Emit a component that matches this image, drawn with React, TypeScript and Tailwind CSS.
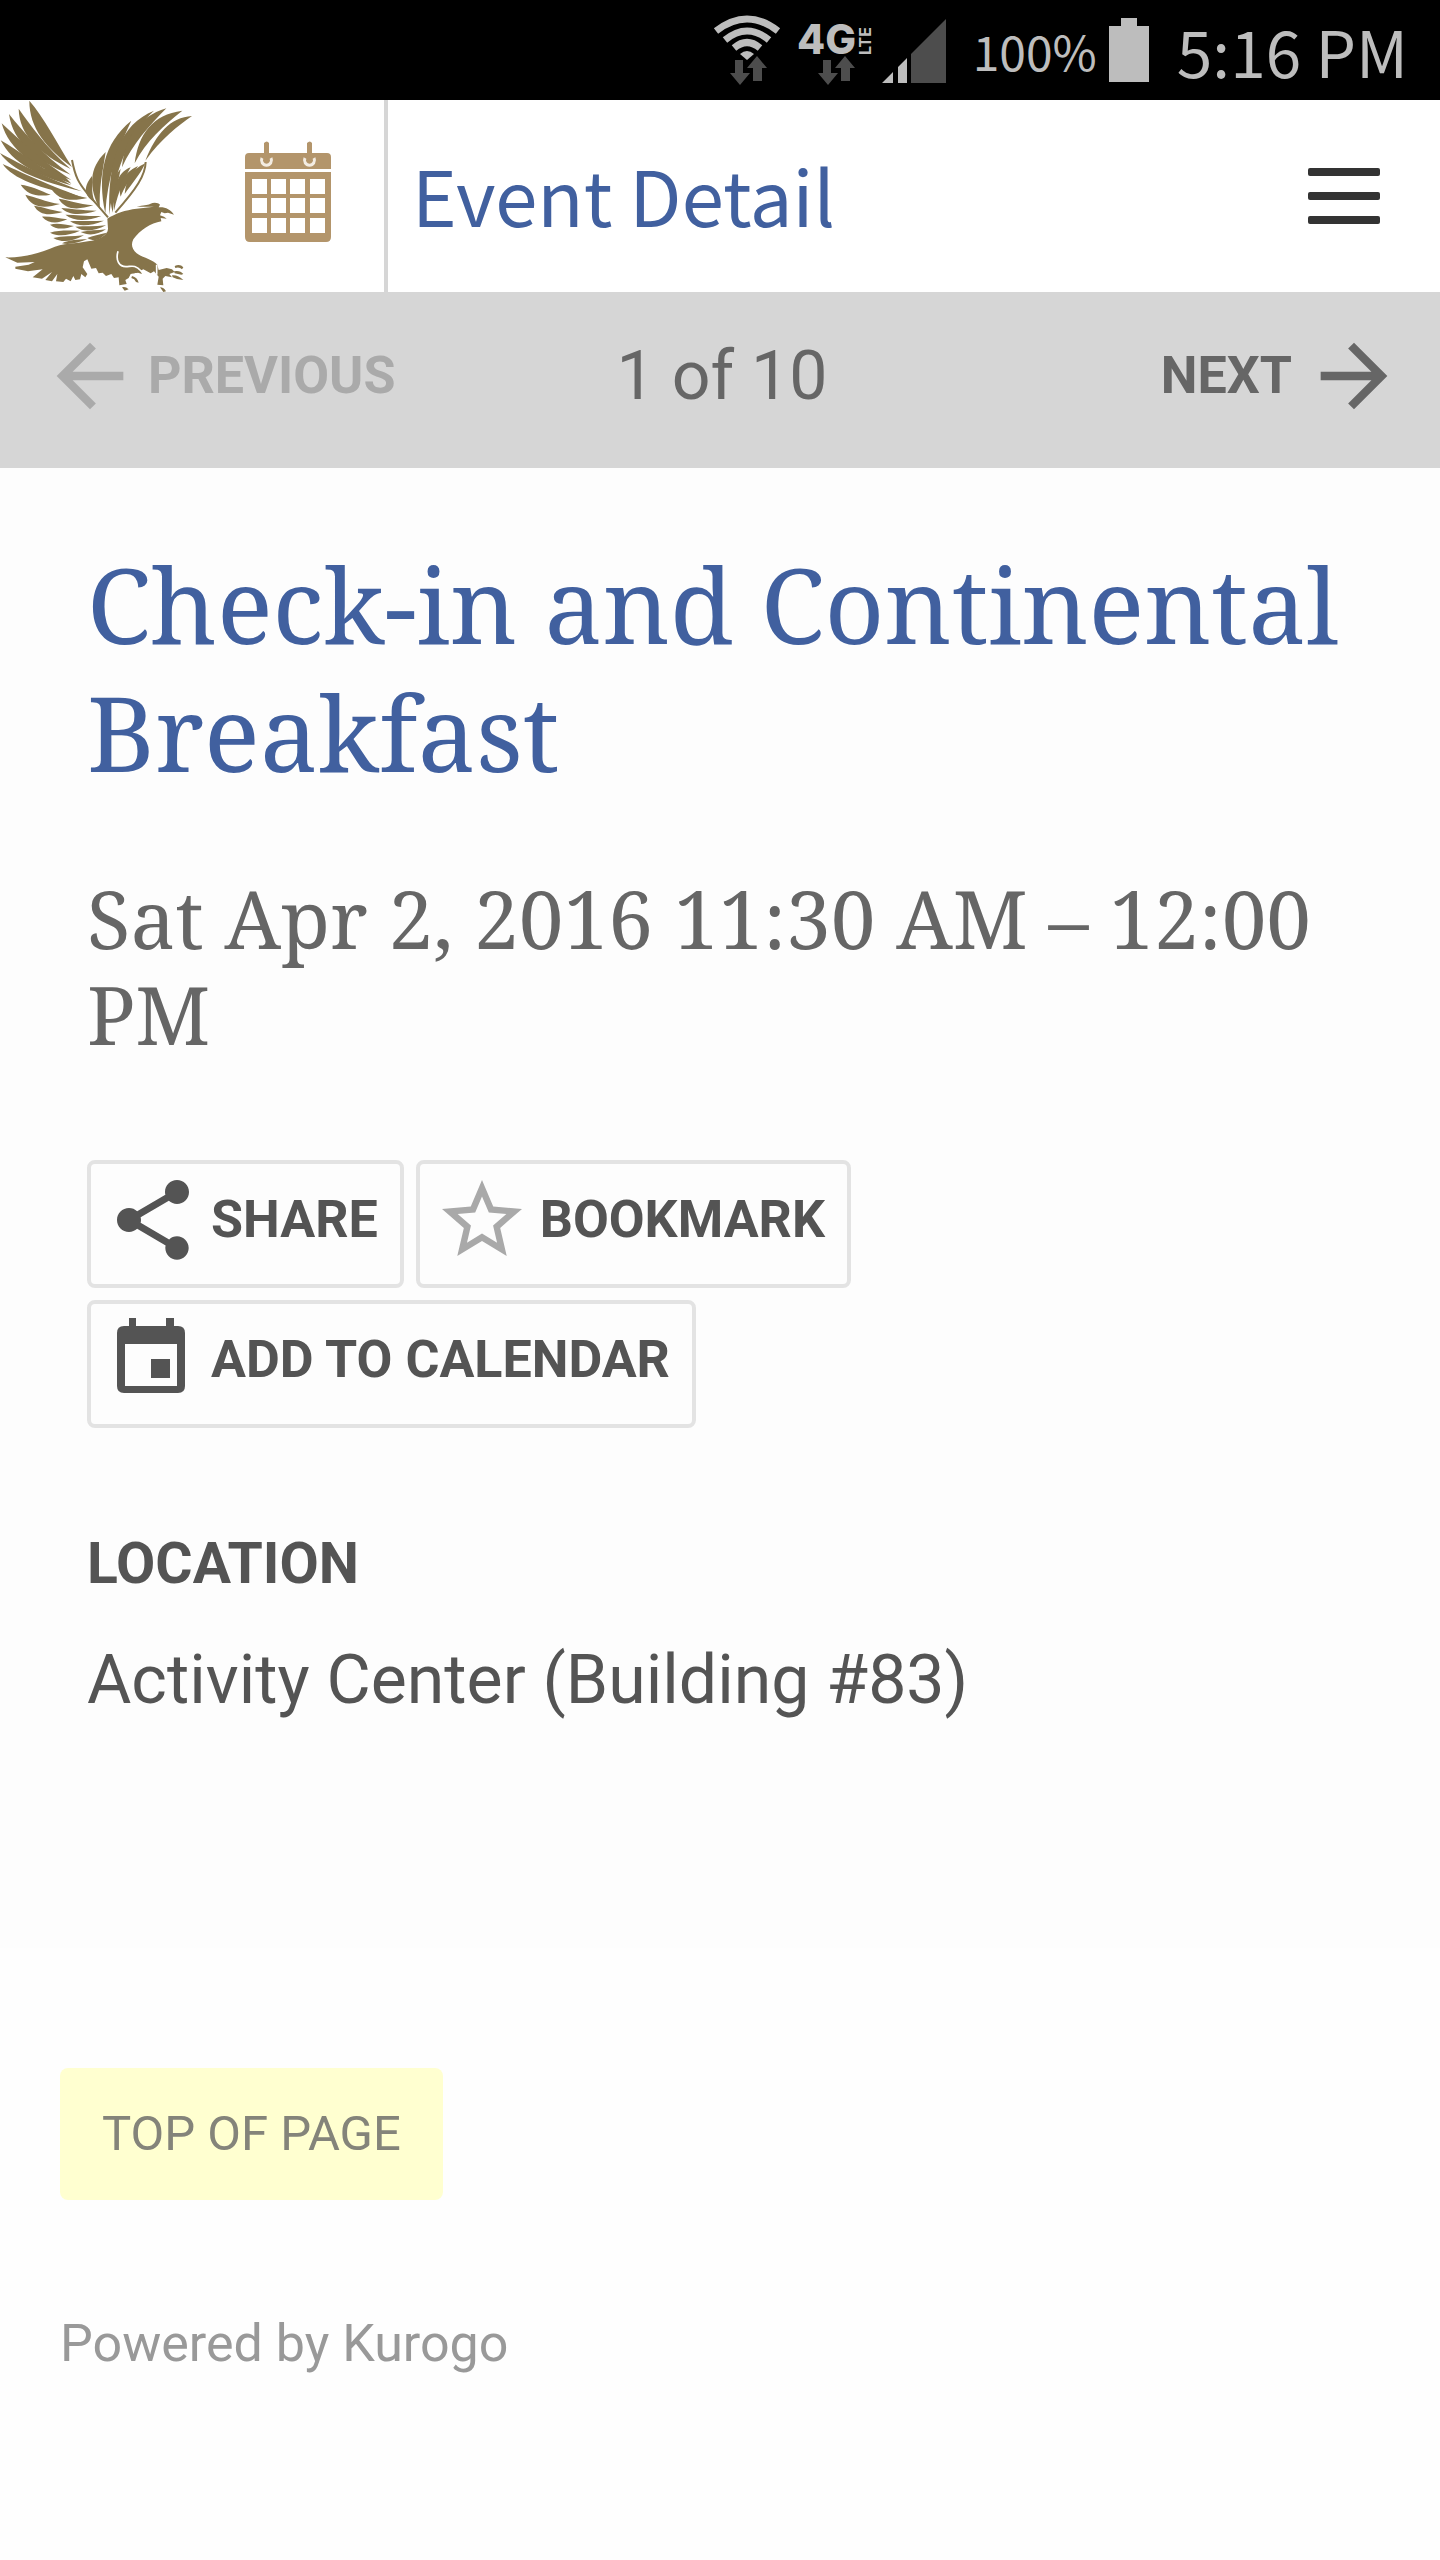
import React from "react";
import { MdArrowBack, MdArrowForward, MdShare, MdStarBorder } from "react-icons/md";

// tip x/y, bend x/y, root x/y, width
type Feather = [number, number, number, number, number, number, number];

const feathers: Feather[] = [
  // left wing, long feathers
  [88, 8, 122, 108, 216, 207, 32],
  [56, 32, 84, 128, 212, 213, 26],
  [27, 48, 68, 152, 212, 230, 26],
  [5, 76, 60, 172, 214, 246, 26],
  [2, 127, 70, 202, 214, 262, 24],
  [0, 165, 60, 222, 246, 280, 17],
  [8, 198, 60, 244, 246, 298, 17],
  [112, 214, 170, 224, 214, 257, 18],
  // left wing, outer short feathers
  [62, 260, 100, 286, 152, 290, 18],
  [76, 290, 110, 324, 180, 318, 20],
  [102, 323, 130, 346, 188, 342, 16],
  [126, 356, 160, 372, 202, 364, 14],
  [150, 380, 180, 388, 222, 384, 13],
  [150, 404, 190, 408, 240, 398, 13],
  [160, 420, 200, 428, 252, 412, 13],
  [186, 436, 220, 432, 262, 424, 9],
  // left wing, inner short feathers
  [150, 266, 190, 302, 262, 300, 20],
  [176, 302, 210, 330, 280, 322, 18],
  [184, 330, 220, 348, 290, 338, 13],
  [196, 350, 240, 366, 304, 354, 13],
  [210, 370, 250, 382, 312, 368, 12],
  [226, 386, 266, 398, 318, 382, 12],
  [242, 402, 280, 408, 318, 394, 11],
  [262, 420, 290, 424, 320, 404, 13],
  // right wing, long feathers
  [276, 234, 254, 286, 286, 314, 18],
  [317, 162, 272, 240, 300, 334, 26],
  [394, 68, 302, 180, 316, 346, 28],
  [462, 38, 338, 112, 328, 350, 24],
  [499, 31, 396, 90, 366, 208, 26],
  [547, 38, 438, 80, 404, 196, 28],
  [576, 54, 496, 78, 436, 188, 20],
  // right wing, inner feathers
  [362, 212, 332, 270, 338, 344, 15],
  [392, 208, 350, 240, 342, 338, 17],
  [414, 204, 362, 250, 362, 296, 18],
  [436, 196, 392, 236, 374, 288, 18],
];

function featherPath([tx, ty, bx, by, rx, ry, w]: Feather) {
  const length = Math.hypot(rx - tx, ry - ty);
  const nx = (-(ry - ty) / length) * w;
  const ny = ((rx - tx) / length) * w;
  const c1x = tx + ((bx - tx) * 2) / 3;
  const c1y = ty + ((by - ty) * 2) / 3;
  const c2x = rx + ((bx - rx) * 2) / 3;
  const c2y = ry + ((by - ry) * 2) / 3;
  return `M${tx} ${ty}C${c1x + nx * 0.85} ${c1y + ny * 0.85} ${c2x + nx * 0.55} ${c2y + ny * 0.55} ${rx} ${ry}C${c2x - nx * 0.55} ${c2y - ny * 0.55} ${c1x - nx * 0.85} ${c1y - ny * 0.85} ${tx} ${ty}Z`;
}

const EagleLogo = () => (
  <svg className="h-48 w-48" viewBox="0 6 576 576" fill="#86744a" aria-hidden="true">
    {feathers.map((feather, index) => (
      <path key={index} d={featherPath(feather)} />
    ))}
    {/* leading edges of both wings */}
    <path
      d="M216 186C226 238 236 254 260 284L324 358M437 192C436 232 410 272 346 344"
      fill="none"
      stroke="#86744a"
      strokeWidth="6"
    />
    {/* body, head and tail */}
    <path d="M322 362C346 346 376 336 410 332L462 326L410 326C430 322 442 322 450 318C462 312 474 314 480 320L476 328C494 326 512 334 522 350L504 344L494 346L484 342L480 352L492 356L500 362L482 360L484 370C452 376 420 396 400 424C392 440 396 454 410 466C430 480 458 484 472 500L476 516L500 510L516 514L524 522L508 528L516 538L496 534L488 542L490 562L472 560L476 536L462 520L452 526L430 514L410 524L392 528L386 540L376 546L380 558L358 562L356 538L342 540L334 528L318 534L308 524L296 526L288 510L274 512L262 484L252 490L248 508L262 528L256 538L244 528L240 544L226 546L220 534L212 550L198 542L190 552L168 550L172 528L156 550L136 546L156 522L126 542L98 538L128 514L84 520L46 512L46 506L86 500L104 492L52 494L16 478C60 480 110 468 150 452C190 434 226 438 264 430C296 426 324 412 324 392Z" />
    {/* thigh line */}
    <path
      d="M354 460C346 488 358 506 378 506C394 506 404 498 424 520M470 500L470 530"
      fill="none"
      stroke="#fff"
      strokeWidth="5"
    />
    {/* talons */}
    <path d="M524 504Q540 496 550 508L546 514Q538 506 526 510ZM522 520Q540 516 550 528L544 530L524 526ZM516 532Q534 530 550 546Q532 546 518 538ZM398 516Q418 510 426 528L414 524L400 526ZM396 534Q412 538 416 554L408 552Q404 542 394 540ZM366 568Q376 564 386 574L374 578ZM480 568Q492 568 498 580L490 582Z" />
  </svg>
);

const CalendarIcon = () => (
  <svg className="h-[102px] w-[86px]" viewBox="0 0 86 102" fill="#b3956b" aria-hidden="true">
    <path d="M4 12H82Q86 12 86 16V28H0V16Q0 12 4 12ZM0 31H86V96Q86 101 81 101H5Q0 101 0 96ZM7 38V53H22V38ZM26 38V53H41V38ZM45 38V53H60V38ZM65 38V53H80V38ZM7 57V72H22V57ZM26 57V72H41V57ZM45 57V72H60V57ZM65 57V72H80V57ZM7 77V92H22V77ZM26 77V92H41V77ZM45 77V92H60V77ZM65 77V92H80V77Z" fillRule="evenodd" />
    <path d="M17 17A5 5 0 1 0 26 17M60 17A5 5 0 1 0 69 17" fill="none" stroke="#f3ece2" strokeWidth="3" />
    <path d="M19 2Q22 -1 24 2V20Q22 23 19 20ZM62 2Q65 -1 67 2V20Q65 23 62 20Z" />
  </svg>
);

const EventIcon = () => (
  <svg className="h-24 w-24 shrink-0" viewBox="0 0 96 96" fill="currentColor" aria-hidden="true">
    <path
      d="M24 6H31V14H61V6H69V14H73Q80 14 80 21V74Q80 81 73 81H19Q12 81 12 74V21Q12 14 19 14H24ZM20 32V74H72V32ZM46 47H65V66H46Z"
      fillRule="evenodd"
    />
  </svg>
);

const DataArrows = ({ x }: { x: number }) => (
  <path
    d="M5 4H13V17H20L10 29L0 17H5ZM23 25V12H17L27 0L37 12H32V25Z"
    transform={`translate(${x} 56)`}
    fill="#4d4d4d"
  />
);

const StatusBar = () => (
  <div className="flex h-[100px] items-center justify-end bg-black pr-8 font-['Noto_Sans_CJK_JP','Noto_Sans',sans-serif] text-[#bdbdbd]">
    <svg className="h-[100px] w-[236px]" viewBox="0 0 236 100" role="img" aria-label="Wi-Fi and 4G LTE signal">
      <g fill="none" stroke="#bdbdbd" strokeWidth="7">
        <path d="M3 31Q34 7 65 31" />
        <path d="M12 40Q34 22 56 40" />
        <path d="M21 48Q34 37 47 48" />
      </g>
      <path d="M27 54Q34 48 41 54L34 60Z" fill="#bdbdbd" />
      <DataArrows x={17} />
      <text x="84" y="54" fill="#bdbdbd" fontFamily="Inter, sans-serif" fontSize="41" fontWeight="800">
        4G
      </text>
      <text
        transform="translate(158 55) rotate(-90)"
        fill="#bdbdbd"
        fontFamily="Inter, sans-serif"
        fontSize="16"
        fontWeight="700"
      >
        LTE
      </text>
      <DataArrows x={105} />
      <path d="M169 83L180 72V83ZM185 67L194 58V83H185Z" fill="#bdbdbd" />
      <path d="M198 54L233 19V83H198Z" fill="#4d4d4d" />
    </svg>
    <span className="ml-6 text-[48px] leading-[64px]">100%</span>
    <svg className="ml-3 h-16 w-10" viewBox="0 0 40 64" fill="#bdbdbd" aria-hidden="true">
      <path d="M12 0H28V8H40V64H0V8H12Z" />
    </svg>
    <span className="ml-7 text-[64px] leading-[64px]">5:16 PM</span>
  </div>
);

const Header = () => (
  <header className="flex h-48 items-center bg-white">
    <a href="#home" aria-label="Home">
      <EagleLogo />
    </a>
    <a
      href="#events"
      aria-label="Events"
      className="flex h-full w-[196px] items-center justify-center border-r-4 border-[#d6d6d6] pb-2"
    >
      <CalendarIcon />
    </a>
    <h1 className="grow pb-1 pl-6 font-['Noto_Sans_CJK_JP','Noto_Sans',sans-serif] text-[76px] leading-[96px] text-[#41609f]">
      Event Detail
    </h1>
    <button type="button" aria-label="Menu" className="mr-[60px] flex w-[72px] flex-col gap-4">
      <span className="h-2 w-full rounded-xs bg-[#333]" />
      <span className="h-2 w-full rounded-xs bg-[#333]" />
      <span className="h-2 w-full rounded-xs bg-[#333]" />
    </button>
  </header>
);

const Pager = () => (
  <nav className="grid h-44 grid-cols-[1fr_auto_1fr] items-center bg-[#d6d6d6] pr-9 pb-2 pl-10 text-[#666]">
    <button type="button" disabled className="flex items-center gap-2 text-[52px] leading-[64px] font-bold text-[#aaa]">
      <MdArrowBack className="size-[100px]" />
      PREVIOUS
    </button>
    <span className="text-[68px] leading-[80px]">1 of 10</span>
    <a href="#next" className="flex items-center justify-end gap-3 text-[52px] leading-[64px] font-bold">
      NEXT
      <MdArrowForward className="size-[100px]" />
    </a>
  </nav>
);

const ActionButton = ({ icon, children }: { icon: React.ReactNode; children: React.ReactNode }) => (
  <button
    type="button"
    className="flex h-32 items-center gap-[10px] rounded-lg border-4 border-[#e3e3e3] pr-[22px] pb-2 pl-[14px] text-[52px] leading-[64px] font-bold"
  >
    {icon}
    {children}
  </button>
);

const App = () => {
  return (
    <div className="min-h-screen bg-[#fefefe] font-[Roboto,sans-serif]">
      <StatusBar />
      <Header />
      <Pager />

      <main className="bg-[#fdfdfd] px-[87px] pt-[72px] pb-[228px] text-[#545454]">
        <h2 className="font-['Noto_Serif','DejaVu_Serif',serif] text-[104px] leading-[128px] text-[#41609f]">
          Check-in and Continental Breakfast
        </h2>
        <p className="mt-[74px] font-['Noto_Serif','DejaVu_Serif',serif] text-[80px] leading-[96px] text-[#666]">
          Sat Apr 2, 2016 11:30 AM – 12:00 PM
        </p>

        <div className="mt-[98px] flex flex-wrap gap-3">
          <ActionButton icon={<MdShare className="size-24" />}>SHARE</ActionButton>
          <ActionButton icon={<MdStarBorder className="size-24 text-[#a9a9a9]" />}>BOOKMARK</ActionButton>
          <ActionButton icon={<EventIcon />}>ADD TO CALENDAR</ActionButton>
        </div>

        <h3 className="mt-24 text-[57px] leading-[80px] font-bold">LOCATION</h3>
        <p className="mt-9 text-[68px] leading-[80px]">Activity Center (Building #83)</p>
      </main>

      <footer className="px-[60px] pt-[120px] pb-12">
        <a
          href="#top"
          className="inline-block rounded-lg bg-[#ffffd0] px-[42px] py-[34px] text-[49px] leading-[64px] text-[#84847a]"
        >
          TOP OF PAGE
        </a>
        <p className="mt-28 text-[52px] leading-[64px] text-[#999]">Powered by Kurogo</p>
      </footer>
    </div>
  );
};

export default App;
